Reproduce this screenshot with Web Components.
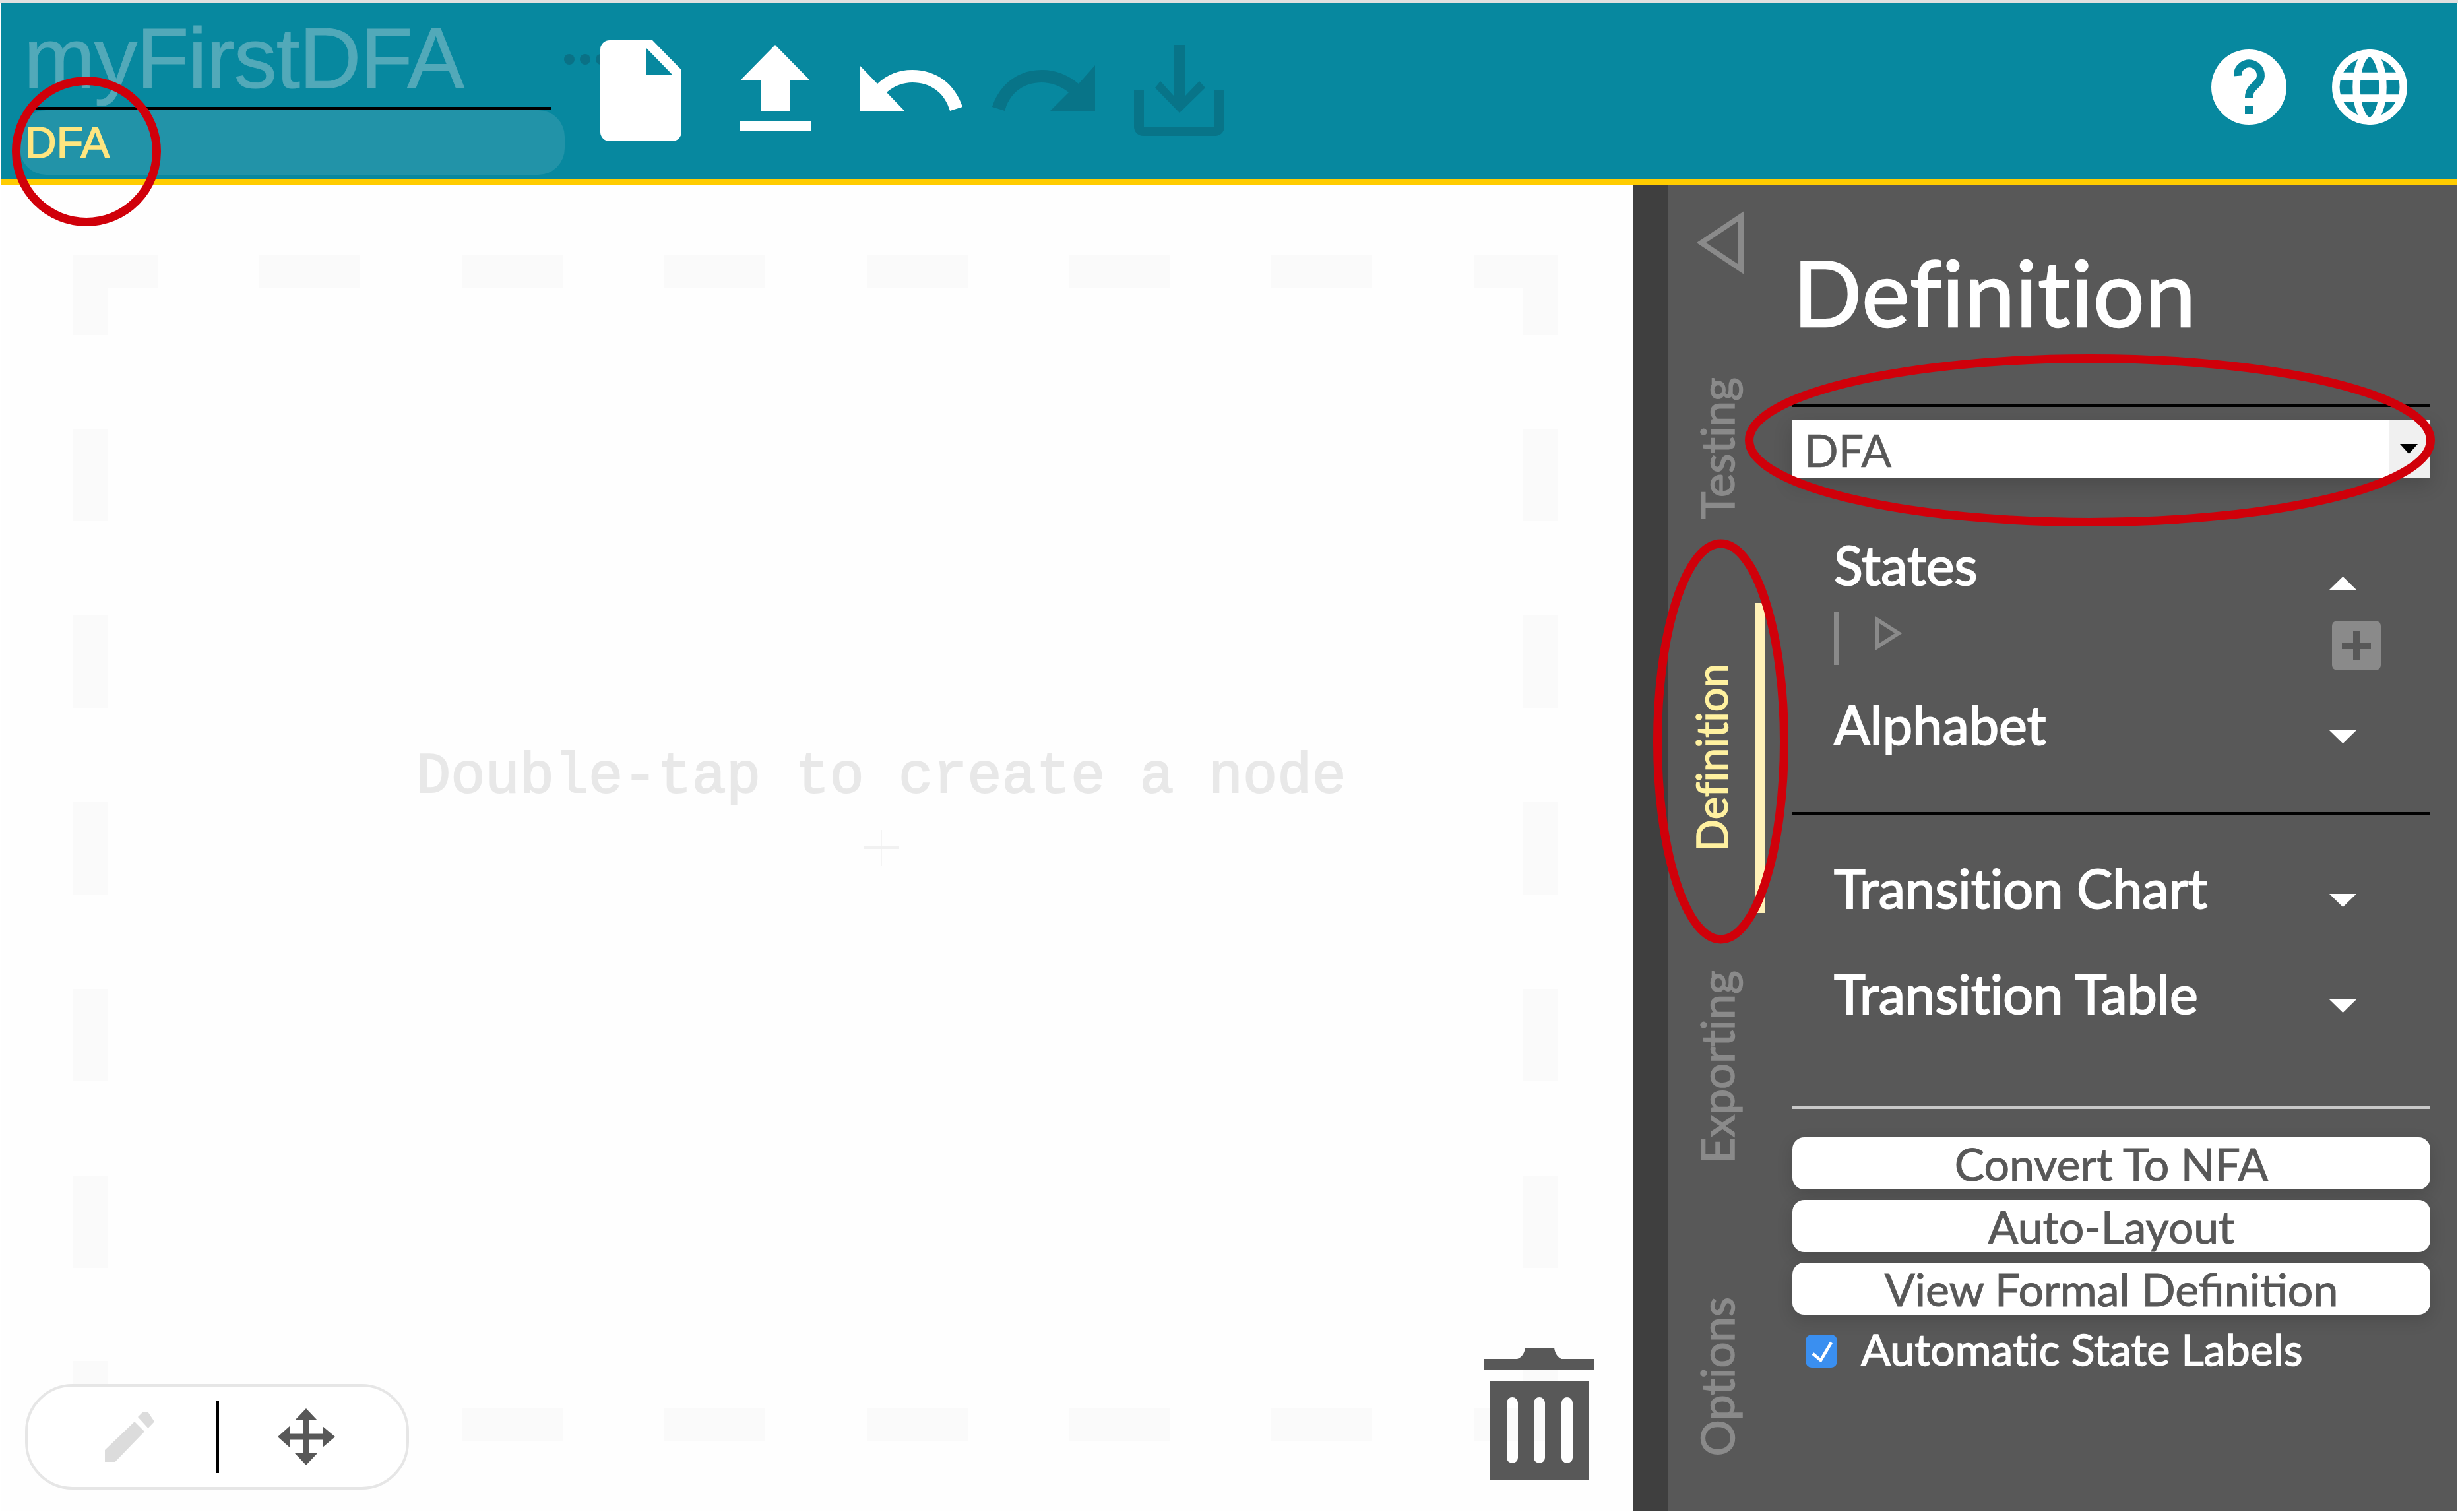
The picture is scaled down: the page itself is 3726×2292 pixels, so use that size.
<!DOCTYPE html>
<html>
<head>
<meta charset="utf-8">
<title>myFirstDFA</title>
<style>
    html, body { margin: 0; padding: 0; background: #fff; }
    body { width: 3726px; height: 2292px; overflow: hidden; position: relative; font-family: Lato, "Liberation Sans", sans-serif; }
</style>
</head>
<body>
<top-bar>
    <title-box name="myFirstDFA" kind="DFA"></title-box>
    <tool-icon name="dots"></tool-icon>
    <tool-icon name="file"></tool-icon>
    <tool-icon name="upload" gap="88"></tool-icon>
    <tool-icon name="undo" gap="73"></tool-icon>
    <tool-icon name="redo" gap="45"></tool-icon>
    <tool-icon name="download" gap="59"></tool-icon>
    <span slot="end"><tool-icon name="help"></tool-icon></span>
    <span slot="end"><tool-icon name="globe" gap="69"></tool-icon></span>
</top-bar>
<app-main>
    <node-canvas></node-canvas>
    <side-panel>
        <panel-tab>Testing</panel-tab>
        <panel-tab active>Definition</panel-tab>
        <panel-tab>Exporting</panel-tab>
        <panel-tab>Options</panel-tab>
    </side-panel>
</app-main>
<red-marks></red-marks>

<script>
const ICONS = {
    dots: { x: 855, w: 55, body: '<g fill="#0a7186" style="overflow:visible"><circle cx="863" cy="90" r="8"/><circle cx="887" cy="90" r="8"/><circle cx="911" cy="90" r="8"/></g>' },
    file: { x: 910, w: 124, body: '<path fill="#fff" fill-rule="evenodd" d="M924 61H989L1033 106V200a14 14 0 0 1-14 14H924a14 14 0 0 1-14-14V75a14 14 0 0 1 14-14ZM979 72V114H1020Z"/>' },
    upload: { x: 1122, w: 108, body: '<path fill="#fff" d="M1175 68L1228 122H1198V168H1153V122H1122ZM1122 183H1230V198H1122Z"/>' },
    undo: { x: 1303, w: 156, body: '<path fill="#fff" d="M1303 99V168H1371L1344 140C1355 130 1370 125 1383 125C1410 125 1432 140 1440 168L1459 162C1448 128 1420 106 1383 106C1362 106 1345 113 1330 127Z"/>' },
    redo: { x: 1504, w: 156, body: '<path fill="#087488" d="M1660 99V168H1592L1620 140C1608 130 1592 125 1579 125C1552 125 1531 140 1523 168L1504 162C1515 128 1543 106 1579 106C1600 106 1618 113 1635 127Z"/>' },
    download: { x: 1719, w: 137, body: '<path fill="#087488" d="M1719 137H1734V192H1841V137H1856V192a14 14 0 0 1-14 14H1733a14 14 0 0 1-14-14ZM1779 68H1797V145L1818 123L1827 133L1788 171L1751 133L1759 123L1779 145Z"/>' },
    help: { x: 3352, w: 114, body: '<circle cx="3409" cy="132" r="57" fill="#fff"/><path fill="none" stroke="#07889f" stroke-width="12" d="M3392 115a17.5 17.5 0 1 1 29 12c-6 6-12 10-12 21"/><rect x="3403" y="161" width="12" height="12" fill="#07889f"/>' },
    globe: { x: 3535, w: 114, body: '<g fill="none" stroke="#fff" stroke-width="11.5"><circle cx="3592" cy="132" r="51.2"/><ellipse cx="3592" cy="132" rx="20" ry="51.2"/><path d="M3543 115.500H3641M3543 149H3641"/></g>' }
};

class TopBar extends HTMLElement {
    constructor() {
        super();
        this.attachShadow({ mode: 'open' });
        this.shadowRoot.innerHTML = `
            <style>
                :host { display: block; border-top: 4px solid #e0e0e0; }
                .bar {
                    display: flex;
                    height: 267px;
                    margin: 0 1px;
                    background: #07889f;
                    border-bottom: 10px solid #ffcc00;
                    padding-left: 29px;
                }
                .end { display: flex; margin-left: auto; padding-right: 76px; }
            </style>
            <div class="bar">
                <slot></slot>
                <div class="end"><slot name="end"></slot></div>
            </div>
        `;
    }
}

class TitleBox extends HTMLElement {
    constructor() {
        super();
        this.attachShadow({ mode: 'open' });
    }
    connectedCallback() {
        this.shadowRoot.innerHTML = `
            <style>
                :host { display: block; width: 826px; margin-right: -1px; font-family: "Liberation Sans", sans-serif; }
                .name {
                    height: 158px;
                    margin: 0 21px 0 18px;
                    border-bottom: 5px solid #000;
                    box-sizing: content-box;
                    font-size: 130px;
                    line-height: 158px;
                    letter-spacing: -1.200px;
                    color: #52a9b9;
                    white-space: nowrap;
                    -webkit-text-stroke: 1px #52a9b9;
                }
                .name span { position: relative; left: -12px; top: 5px; }
                .kind {
                    height: 98px;
                    background: #2293a8;
                    border-radius: 40px;
                    padding-left: 8px;
                    font-size: 66px;
                    line-height: 99px;
                    color: #ffe680;
                    -webkit-text-stroke: 1.500px #ffe680;
                }
            </style>
            <div class="name"><span>${this.getAttribute('name')}</span></div>
            <div class="kind">${this.getAttribute('kind')}</div>
        `;
    }
}

class ToolIcon extends HTMLElement {
    constructor() {
        super();
        this.attachShadow({ mode: 'open' });
    }
    connectedCallback() {
        const icon = ICONS[this.getAttribute('name')];
        const small = icon.w === 114;
        const top = small ? 75 : 56;
        const h = small ? 114 : 160;
        this.shadowRoot.innerHTML = `
            <style>
                :host { display: block; height: ${h}px; margin-top: ${top - 4}px; margin-left: ${this.getAttribute('gap') || 0}px; }
                svg { display: block; overflow: visible; }
            </style>
            <svg width="${icon.w}" height="${h}" viewBox="${icon.x} ${top} ${icon.w} ${h}">${icon.body}</svg>
        `;
    }
}

class AppMain extends HTMLElement {
    constructor() {
        super();
        this.attachShadow({ mode: 'open' });
        this.shadowRoot.innerHTML = `
            <style>
                :host { display: flex; height: 2010px; margin: 0 1px; overflow: hidden; }
            </style>
            <slot></slot>
        `;
    }
}

class NodeCanvas extends HTMLElement {
    constructor() {
        super();
        this.attachShadow({ mode: 'open' });
    }
    connectedCallback() {
        const rect = (x, y, w, h) => `<rect x="${x}" y="${y}" width="${w}" height="${h}"/>`;
        let dashes = rect(111, 386, 128, 51) + rect(111, 386, 52, 122)
            + rect(2234, 386, 127, 51) + rect(2309, 386, 52, 122)
            + rect(111, 2134, 128, 51) + rect(111, 2063, 52, 122)
            + rect(2234, 2134, 127, 51) + rect(2309, 2063, 52, 122);
        [393, 700, 1007, 1314, 1620, 1927].forEach(x => {
            dashes += rect(x, 386, 153, 51) + rect(x, 2134, 153, 51);
        });
        [650, 933, 1216, 1499, 1782].forEach(y => {
            dashes += rect(111, y, 52, 140) + rect(2309, y, 52, 140);
        });
        this.shadowRoot.innerHTML = `
            <style>
                :host { display: block; position: relative; flex: 0 0 2474px; background: #fefefe; }
                svg { position: absolute; left: 0; top: 0; }
                .hint {
                    position: absolute;
                    left: 630px;
                    top: 847px;
                    font: 87px/100px "Liberation Mono", monospace;
                    color: #e8e8e8;
                    -webkit-text-stroke: 2px #e8e8e8;
                    white-space: nowrap;
                }
                .cross { position: absolute; left: 1308px; top: 977px; width: 54px; height: 54px; }
                .cross::before { content: ''; position: absolute; left: 26px; top: 0; width: 2px; height: 54px; background: #f4f4f4; }
                .cross::after { content: ''; position: absolute; left: 0; top: 24px; width: 54px; height: 5px; background: #f1f1f1; }
                tool-pill { position: absolute; left: 37px; top: 1817px; }
            </style>
            <svg width="2474" height="2010" viewBox="1 281 2474 2010"><g fill="#fafafa">${dashes}</g>
                <path fill="#585858" fill-rule="evenodd" d="M2250 2060H2300C2306 2058 2311 2052 2312 2043H2356C2357 2052 2362 2058 2367 2060H2417V2077H2250ZM2259 2093H2409V2243H2259ZM2292.500 2118a8.500 8.500 0 0 0-8.500 8.500V2209.500a8.500 8.500 0 0 0 17 0V2126.500a8.500 8.500 0 0 0-8.500-8.500ZM2333.500 2118a8.500 8.500 0 0 0-8.500 8.500V2209.500a8.500 8.500 0 0 0 17 0V2126.500a8.500 8.500 0 0 0-8.500-8.500ZM2375.500 2118a8.500 8.500 0 0 0-8.500 8.500V2209.500a8.500 8.500 0 0 0 17 0V2126.500a8.500 8.500 0 0 0-8.500-8.500Z"/>
            </svg>
            <div class="hint">Double-tap to create a node</div>
            <div class="cross"></div>
            <tool-pill></tool-pill>
        `;
    }
}

class ToolPill extends HTMLElement {
    constructor() {
        super();
        this.attachShadow({ mode: 'open' });
        this.shadowRoot.innerHTML = `
            <style>
                :host {
                    display: flex;
                    align-items: center;
                    box-sizing: border-box;
                    width: 582px;
                    height: 160px;
                    padding-left: 117px;
                    background: #fff;
                    border: 4px solid #e6e6e6;
                    border-radius: 72px;
                }
                .line { width: 5px; height: 110px; margin: 0 89px 0 93px; background: #000; }
                svg { display: block; }
            </style>
            <svg width="75" height="76" viewBox="159 2135 75 76"><path fill="#dcdcdc" d="M159 2211V2193L204 2150L219 2165L174.500 2211ZM209 2143L217 2135H224L234 2150L224.500 2160Z"/></svg>
            <div class="line"></div>
            <svg width="87" height="86" viewBox="421 2130 87 86"><path fill="#585858" d="M464 2130L481 2148H468.500V2168.500H489V2157L508 2173L489 2189V2177.500H468.500V2198H481L464 2216L447 2198H459.500V2177.500H439V2189L421 2173L439 2157V2168.500H459.500V2148H447Z"/></svg>
        `;
    }
}

class SidePanel extends HTMLElement {
    constructor() {
        super();
        this.attachShadow({ mode: 'open' });
        this.shadowRoot.innerHTML = `
            <style>
                :host {
                    display: flex;
                    flex: 1;
                    background: #585858;
                    border-left: 54px solid #3f3f3f;
                    color: #fff;
                    font-family: Lato, sans-serif;
                }
                .tabs { flex: 0 0 188px; }
                .back { display: block; height: 164px; }
                .body { flex: 0 0 967px; }
                h1 {
                    margin: 0;
                    box-sizing: border-box;
                    padding: 81px 0 0 1px;
                    font-size: 137px;
                    line-height: 160px;
                    font-weight: 400;
                    letter-spacing: 1px;
                    -webkit-text-stroke: 2.500px #fff;
                    border-bottom: 5px solid #000;
                    height: 336px;
                }
                kind-select { margin-top: 20px; }
                drawer-row[first] { margin-top: 81px; }
                .states {
                    display: flex;
                    align-items: flex-start;
                    height: 89px;
                    margin-top: 21px;
                    padding-left: 63px;
                }
                .caret { width: 7px; height: 81px; background: #8a8a8a; }
                .play { margin: 6px 0 0 55px; }
                .add {
                    display: flex;
                    align-items: center;
                    justify-content: center;
                    width: 74px;
                    height: 75px;
                    margin: 14px 75px 0 auto;
                    background: #8a8a8a;
                    border-radius: 8px;
                }
                .rule { height: 4px; background: #000; }
                .rule.light { background: #c8c8c8; margin-top: 121px; }
                .stack { display: flex; flex-direction: column; gap: 16px; margin-top: 43px; }
                .check { display: flex; align-items: center; margin-top: 27px; padding-left: 20px; height: 56px; font-size: 66.500px; font-variant-ligatures: none; -webkit-text-stroke: 1.500px #fff; }
                .box { display: block; margin-right: 36px; }
                .check span { margin-top: -9px; }
            </style>
            <div class="tabs">
                <svg class="back" width="188" height="164" viewBox="2529 281 188 164">
                    <path fill="none" stroke="#8a8a8a" stroke-width="8" d="M2579 368L2639 328V408Z"/>
                </svg>
                <slot></slot>
            </div>
            <div class="body">
                <h1>Defini<span>t</span>ion</h1>
                <kind-select>DFA</kind-select>
                <drawer-row first open>States</drawer-row>
                <div class="states">
                    <div class="caret"></div>
                    <svg class="play" width="41" height="54" viewBox="2842 933 41 54"><path fill="none" stroke="#8a8a8a" stroke-width="6" d="M2845 939L2878 960L2845 981Z"/></svg>
                    <div class="add"><svg width="44" height="44" viewBox="0 0 44 44"><path fill="#585858" d="M17 0H27V17H44V27H27V44H17V27H0V17H17Z"/></svg></div>
                </div>
                <drawer-row style="margin-top:32px">Alphabet</drawer-row>
                <div class="rule" style="margin-top:83px"></div>
                <drawer-row style="margin-top:61px">Transition Chart</drawer-row>
                <drawer-row style="margin-top:60px">Transition Table</drawer-row>
                <div class="rule light"></div>
                <div class="stack">
                    <panel-button>Convert To NFA</panel-button>
                    <panel-button>Auto-Layout</panel-button>
                    <panel-button>View Formal Defini<span>t</span>ion</panel-button>
                </div>
                <div class="check">
                    <svg class="box" width="48" height="50" viewBox="0 0 48 50">
                        <rect width="48" height="50" rx="9" fill="#3a8ff0"/>
                        <path fill="none" stroke="#fff" stroke-width="4.500" d="M11 29L23 39L39 12"/>
                    </svg>
                    <span>Automatic State Labels</span>
                </div>
            </div>
        `;
    }
}

class PanelTab extends HTMLElement {
    constructor() {
        super();
        this.attachShadow({ mode: 'open' });
        this.shadowRoot.innerHTML = `
            <style>
                :host {
                    display: flex;
                    align-items: center;
                    height: 469px;
                    padding-left: 39px;
                    color: #8a8a8a;
                    font-size: 69px;
                    font-variant-ligatures: none;
                    -webkit-text-stroke: 1.500px #8a8a8a;
                }
                .label {
                    writing-mode: vertical-rl;
                    transform: rotate(180deg);
                    line-height: 70px;
                    white-space: nowrap;
                }
                .bar { display: none; width: 16px; height: 470px; background: #fff1b8; margin-left: 31px; }
                :host([active]) { padding-left: 30px; color: #fff1a0; font-size: 65px; -webkit-text-stroke: 1.500px #fff1a0; }
                :host([active]) .bar { display: block; }
            </style>
            <div class="label"><slot></slot></div>
            <div class="bar"></div>
        `;
    }
}

class KindSelect extends HTMLElement {
    constructor() {
        super();
        this.attachShadow({ mode: 'open' });
        this.shadowRoot.innerHTML = `
            <style>
                :host {
                    display: flex;
                    align-items: center;
                    height: 88px;
                    background: #fff;
                    color: #585858;
                    font-size: 68px;
                    -webkit-text-stroke: .6px #585858;
                    box-shadow: 0 10px 30px rgba(0,0,0,.16);
                }
                .text { flex: 1; padding-left: 18px; }
                .arrow { display: flex; align-items: center; justify-content: center; width: 63px; height: 88px; background: #f0f0f0; }
                .arrow svg { margin-right: 2px; margin-top: -2px; }
            </style>
            <div class="text"><slot></slot></div>
            <div class="arrow"><svg width="27" height="15" viewBox="0 0 27 15"><path d="M0 0H27L13.500 15Z"/></svg></div>
        `;
    }
}

class DrawerRow extends HTMLElement {
    constructor() {
        super();
        this.attachShadow({ mode: 'open' });
    }
    connectedCallback() {
        const open = this.hasAttribute('open');
        const arrow = open ? 'M0 20L20.500 0L41 20Z' : 'M0 0H41L20.500 20Z';
        this.shadowRoot.innerHTML = `
            <style>
                :host {
                    display: flex;
                    align-items: flex-start;
                    height: 100px;
                    padding: 0 112px 0 63px;
                    font-size: 81px;
                    line-height: 100px;
                    color: #fff;
                    font-variant-ligatures: none;
                    -webkit-text-stroke: 2px #fff;
                }
                .label { flex: 1; }
                svg { margin-top: ${open ? 68 : 59}px; }
            </style>
            <div class="label"><slot></slot></div>
            <svg width="41" height="20" viewBox="0 0 41 20"><path fill="#fff" d="${arrow}"/></svg>
        `;
    }
}

class PanelButton extends HTMLElement {
    constructor() {
        super();
        this.attachShadow({ mode: 'open' });
        this.shadowRoot.innerHTML = `
            <style>
                :host {
                    display: block;
                    height: 79px;
                    background: #fff;
                    border-radius: 18px;
                    color: #585858;
                    font-size: 68px;
                    line-height: 79px;
                    text-align: center;
                    -webkit-text-stroke: 1px #585858;
                    box-shadow: 0 8px 24px rgba(0,0,0,.14);
                }
            </style>
            <slot></slot>
        `;
    }
}

class RedMarks extends HTMLElement {
    constructor() {
        super();
        this.attachShadow({ mode: 'open' });
        this.shadowRoot.innerHTML = `
            <style>
                :host { position: absolute; left: 0; top: 0; display: block; pointer-events: none; }
                svg { display: block; }
            </style>
            <svg width="3726" height="2292" viewBox="0 0 3726 2292" fill="none" stroke="#d0000a" stroke-width="13">
                <ellipse cx="131" cy="229.500" rx="106.500" ry="107"/>
                <ellipse cx="3168" cy="667.500" rx="516.500" ry="124"/>
                <ellipse cx="2608.500" cy="1124" rx="96" ry="300"/>
            </svg>
        `;
    }
}

customElements.define('top-bar', TopBar);
customElements.define('title-box', TitleBox);
customElements.define('tool-icon', ToolIcon);
customElements.define('app-main', AppMain);
customElements.define('node-canvas', NodeCanvas);
customElements.define('tool-pill', ToolPill);
customElements.define('side-panel', SidePanel);
customElements.define('panel-tab', PanelTab);
customElements.define('kind-select', KindSelect);
customElements.define('drawer-row', DrawerRow);
customElements.define('panel-button', PanelButton);
customElements.define('red-marks', RedMarks);
</script>
</body>
</html>
